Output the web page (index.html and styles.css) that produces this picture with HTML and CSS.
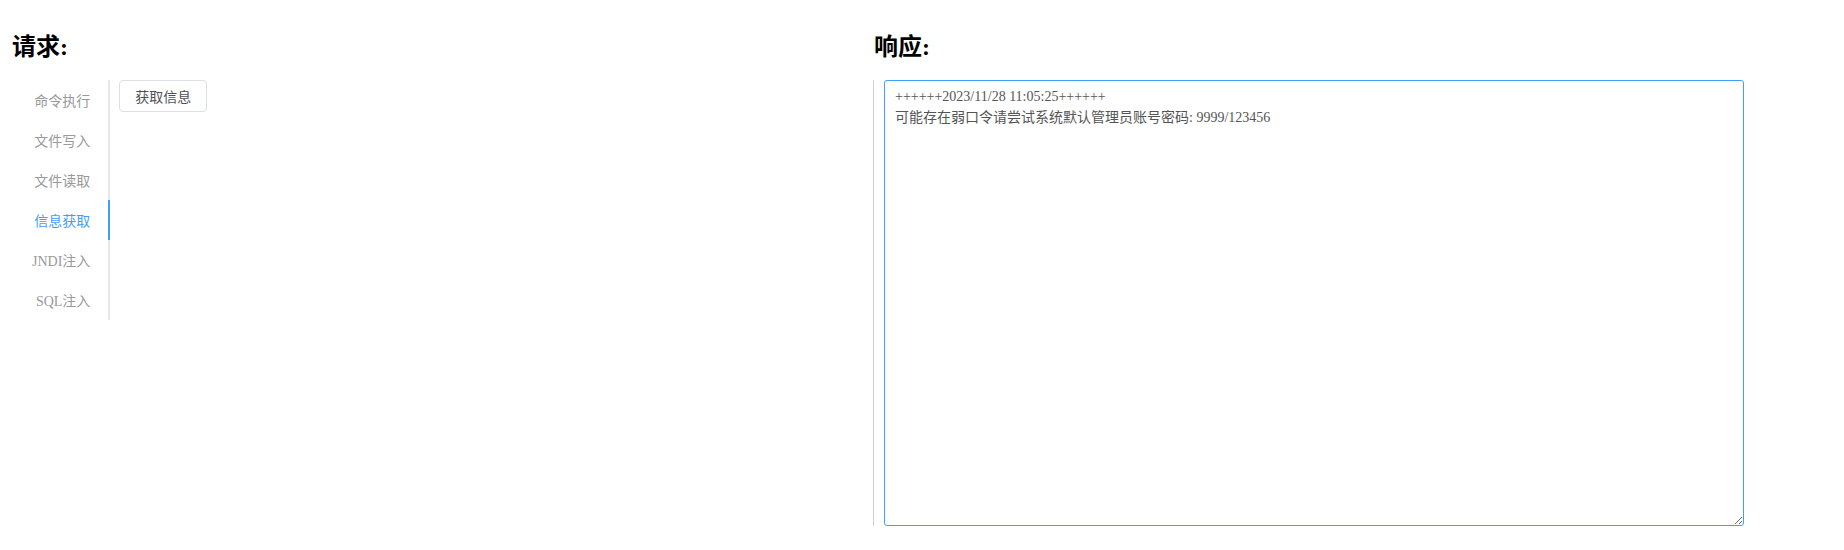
FILE: index.html
```html
<!DOCTYPE html>
<html lang="zh-CN">
<head>
<meta charset="utf-8">
<title>请求 / 响应</title>
<link rel="stylesheet" href="styles.css">
</head>
<body>
<div class="page">
  <section class="col col-req">
    <h2 class="title">请求:</h2>
    <div class="tabs">
      <div class="tab-nav">
        <div class="tab-item">命令执行</div>
        <div class="tab-item">文件写入</div>
        <div class="tab-item">文件读取</div>
        <div class="tab-item active">信息获取</div>
        <div class="tab-item">JNDI注入</div>
        <div class="tab-item">SQL注入</div>
      </div>
      <div class="tab-content">
        <button class="btn" type="button">获取信息</button>
      </div>
    </div>
  </section>
  <section class="col col-resp">
    <h2 class="title title-resp">响应:</h2>
    <div class="resp-box">
      <textarea class="output" id="output" spellcheck="false">++++++2023/11/28 11:05:25++++++
可能存在弱口令请尝试系统默认管理员账号密码: 9999/123456</textarea>
    </div>
  </section>
</div>
<script src="script.js"></script>
</body>
</html>
```

FILE: styles.css
```css
html, body {
  margin: 0;
  padding: 0;
  background: #fff;
}

body {
  font-family: "Liberation Serif", "Noto Sans CJK SC", serif;
  color: #000;
}

.page {
  display: flex;
  padding-top: 30px;
}

.col-req {
  width: 861px;
  padding-left: 12px;
}

.col-resp {
  width: 871px;
}

.title {
  margin: 0 0 18px;
  padding-top: 2px;
  font-size: 24px;
  line-height: 30px;
  font-weight: bold;
  color: #000;
}

.title-resp {
  padding-left: 1px;
}

.tabs {
  display: flex;
  align-items: flex-start;
}

.tab-nav {
  display: flex;
  flex-direction: column;
  border-right: 2px solid #E4E7ED;
}

.tab-item {
  box-sizing: border-box;
  height: 40px;
  line-height: 36px;
  padding: 4px 18px 0 20px;
  text-align: right;
  font-size: 14px;
  color: #999;
  white-space: nowrap;
}

.tab-item.active {
  margin-right: -2px;
  border-right: 2px solid #409EFF;
  color: #409EFF;
}

.tab-content {
  padding-left: 9px;
}

.btn {
  display: block;
  box-sizing: border-box;
  height: 32px;
  margin: 0;
  padding: 3px 15px 0;
  border: 1px solid #DCDFE6;
  border-radius: 4px;
  background: #fff;
  color: #4f5156;
  font-family: "Liberation Serif", "Noto Sans CJK SC", serif;
  font-size: 14px;
  line-height: 27px;
  cursor: pointer;
}

.resp-box {
  height: 446px;
  border-left: 1px solid #cfcfcf;
  padding-left: 10px;
}

.output {
  display: block;
  box-sizing: border-box;
  width: 860px;
  height: 446px;
  margin: 0;
  padding: 5px 10px;
  border: 1px solid #409EFF;
  border-radius: 3px;
  outline: none;
  background: #fff;
  color: #555;
  font-family: "Liberation Serif", "Noto Sans CJK SC", serif;
  font-size: 14px;
  line-height: 1.5;
}
```

FILE: script.js
```js
var t = document.getElementById('output');
t.focus();
t.setSelectionRange(t.value.length, t.value.length);
```
